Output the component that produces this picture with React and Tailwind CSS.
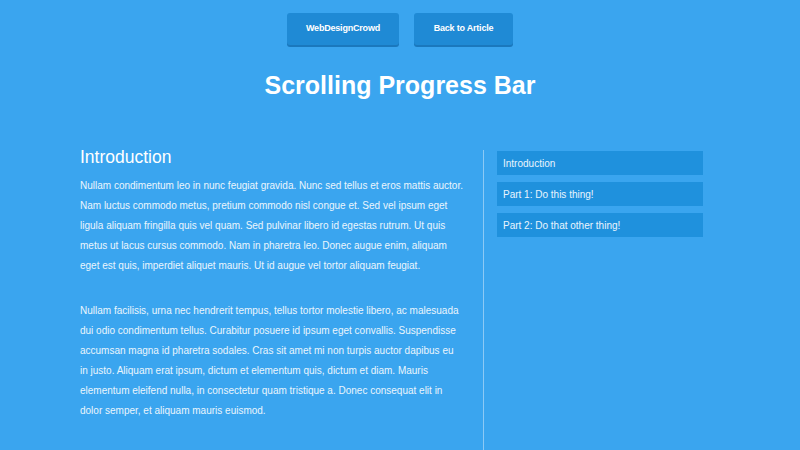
const sections = [
  'Nullam condimentum leo in nunc feugiat gravida. Nunc sed tellus et eros mattis auctor. Nam luctus commodo metus, pretium commodo nisl congue et. Sed vel ipsum eget ligula aliquam fringilla quis vel quam. Sed pulvinar libero id egestas rutrum. Ut quis metus ut lacus cursus commodo. Nam in pharetra leo. Donec augue enim, aliquam eget est quis, imperdiet aliquet mauris. Ut id augue vel tortor aliquam feugiat.',
  'Nullam facilisis, urna nec hendrerit tempus, tellus tortor molestie libero, ac malesuada dui odio condimentum tellus. Curabitur posuere id ipsum eget convallis. Suspendisse accumsan magna id pharetra sodales. Cras sit amet mi non turpis auctor dapibus eu in justo. Aliquam erat ipsum, dictum et elementum quis, dictum et diam. Mauris elementum eleifend nulla, in consectetur quam tristique a. Donec consequat elit in dolor semper, et aliquam mauris euismod.',
]

const toc = ['Introduction', 'Part 1: Do this thing!', 'Part 2: Do that other thing!']

export default function App() {
  return (
    <div className="min-h-screen bg-[#3aa5ef] text-white" style={{ fontFamily: "'Liberation Sans', Arial, sans-serif" }}>
      <div className="flex justify-center gap-[15px] pt-[13px]">
        <a className="flex h-[32px] w-[112px] items-center justify-center rounded-[3px] bg-[#1f8ad5] text-[9px] font-bold tracking-[-0.2px] shadow-[0_2px_0_#1a78bd]">WebDesignCrowd</a>
        <a className="flex h-[32px] w-[99px] items-center justify-center rounded-[3px] bg-[#1f8ad5] text-[9px] font-bold tracking-[-0.2px] shadow-[0_2px_0_#1a78bd]">Back to Article</a>
      </div>
      <h1 className="mt-[24px] text-center text-[25px] font-bold leading-[32px]">Scrolling Progress Bar</h1>
      <div className="mx-auto mt-[45px] flex w-[640px]">
        <div className="w-[403px] pr-[20px]">
          <h2 className="text-[17.5px] leading-[22px]">Introduction</h2>
          <p className="mt-[8px] text-[10px] leading-[20px] text-[#eaf5fd]">{sections[0]}</p>
          <p className="mt-[25px] text-[10px] leading-[20px] text-[#eaf5fd]">{sections[1]}</p>
        </div>
        <div className="mt-[4px] min-h-[300px] border-l border-[#8cc9f5] pl-[13px] pt-[1px]">
          <ul className="flex w-[206px] flex-col gap-[7px]">
            {toc.map(t => (
              <li key={t} className="flex h-[24px] items-center bg-[#1f91dd] px-[6px] text-[10px] text-[#eaf5fd]">{t}</li>
            ))}
          </ul>
        </div>
      </div>
    </div>
  )
}
